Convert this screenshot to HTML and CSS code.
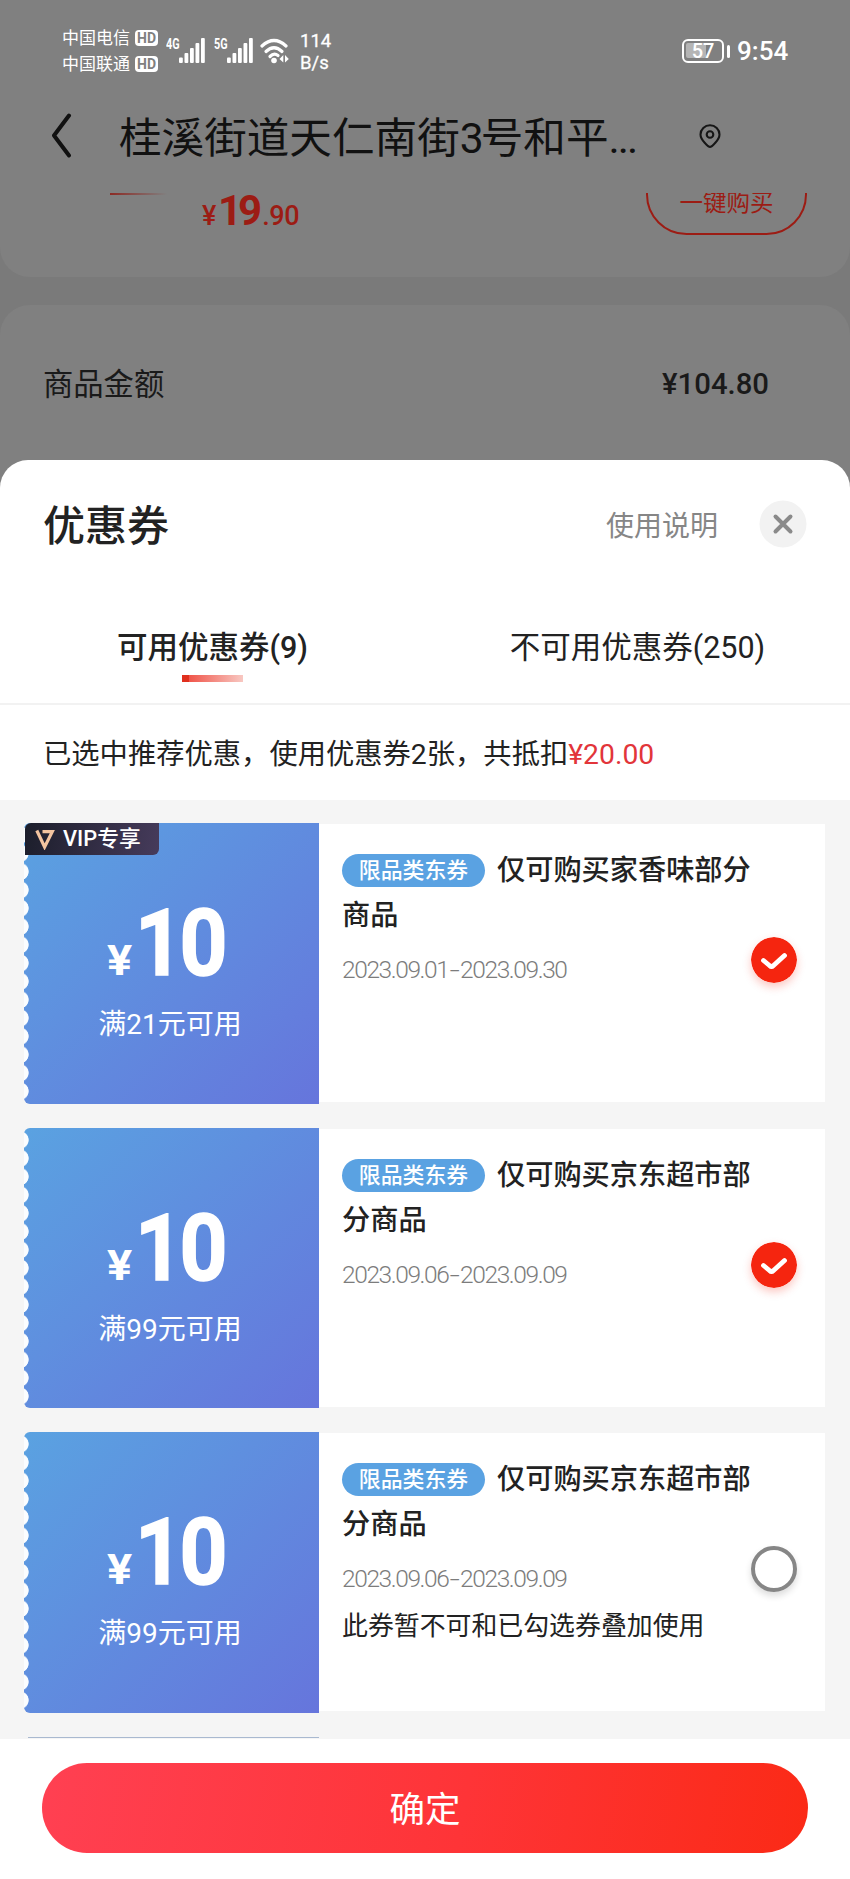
FILE: index.html
```html
<!DOCTYPE html>
<html lang="zh-CN">
<head>
<meta charset="utf-8">
<title>优惠券</title>
<link rel="stylesheet" href="styles.css">
</head>
<body>
<svg width="0" height="0" class="defs">
  <symbol id="bars" viewBox="0 0 26 25">
    <g fill="#fff"><rect x="0" y="19.5" width="3.8" height="5.5" rx="1"/><rect x="5.5" y="15" width="3.8" height="10" rx="1"/><rect x="11" y="10" width="3.8" height="15" rx="1"/><rect x="16.500" y="5" width="3.800" height="20" rx="1"/><rect x="22" y="0" width="3.800" height="25" rx="1"/></g>
  </symbol>
  <symbol id="tick" viewBox="0 0 46 46">
    <circle cx="23" cy="23" r="23" fill="#f5250f"/>
    <path d="M12.500 23.500 Q15.500 26 18.500 28.500 Q20.500 30.500 22.500 28.500 L33.500 18.500" fill="none" stroke="#fff" stroke-width="4.800" stroke-linecap="round" stroke-linejoin="round"/>
  </symbol>
</svg>

<div class="status">
  <div class="carriers">
    <div class="carrier">中国电信<span class="hd">HD</span></div>
    <div class="carrier">中国联通<span class="hd">HD</span></div>
  </div>
  <span class="gen">4G</span><svg class="bars"><use href="#bars"/></svg>
  <span class="gen gen2">5G</span><svg class="bars"><use href="#bars"/></svg>
  <svg class="wifi" viewBox="0 0 30 26">
    <g fill="none" stroke="#fff" stroke-width="3.200" stroke-linecap="round"><path d="M2 8 Q14 -3 26 8"/><path d="M6 13.500 Q14 6 22 13.500"/><path d="M10 18.500 Q14 14.500 18 17.500"/></g>
    <circle cx="14" cy="22.500" r="2.800" fill="#fff"/>
    <path d="M23.300 17 v7.500 L19.500 21 Z M25 17 v7.500 L28.800 21 Z" fill="#fff"/>
  </svg>
  <div class="speed"><div>114</div><div>B/s</div></div>
  <div class="battery"><div class="level"></div><span class="pct">57</span></div>
  <div class="nub"></div>
  <span class="clock">9:54</span>
</div>

<div class="header">
  <svg class="back" viewBox="0 0 22 46"><path d="M18 2.500 L3 22.500 L18 42.500" fill="none" stroke="#111" stroke-width="4" stroke-linecap="round" stroke-linejoin="round"/></svg>
  <div class="address">桂溪街道天仁南街<span class="num">3</span>号和平<span class="dots">...</span></div>
  <svg class="pin" viewBox="0 0 22 25"><path d="M11 23 C9.500 23 1.500 16 1.500 10.500 A9.500 9.200 0 0 1 20.500 10.500 C20.500 16 12.500 23 11 23 Z" fill="none" stroke="#161616" stroke-width="2.100"/><circle cx="11" cy="10.500" r="3.300" fill="none" stroke="#161616" stroke-width="2.100"/></svg>
</div>

<div class="goods">
  <div class="thumb"></div>
  <div class="price"><small class="yen">¥</small><b>19</b><small>.90</small></div>
  <div class="buy">一键购买</div>
</div>
<div class="total">
  <span class="label">商品金额</span><span class="sum">¥104.80</span>
</div>

<div class="sheet">
  <div class="sheet-head">
    <h1>优惠券</h1>
    <span class="help">使用说明</span>
    <svg class="close" viewBox="0 0 48 48"><circle cx="24" cy="24" r="23.500" fill="#f2f2f2"/><path d="M16.500 16.500 L31.500 31.500 M31.500 16.500 L16.500 31.500" stroke="#8a8a8a" stroke-width="4" stroke-linecap="round"/></svg>
  </div>
  <div class="tabs">
    <div class="tab active">可用优惠券(9)</div>
    <div class="tab">不可用优惠券(250)</div>
  </div>
  <div class="summary">已选中推荐优惠，使用优惠券2张，共抵扣<span class="red">¥20.00</span></div>

  <div class="list">
    <div class="coupon">
      <div class="face">
        <div class="vip"><svg class="vip-icon" viewBox="0 0 20 21"><path d="M1.800 1.500 L9.600 18 L17.300 2.600 H7.500" fill="none" stroke="#f3c4a0" stroke-width="3.200"/></svg>VIP专享</div>
        <div class="amount"><span class="cur">¥</span><span class="ten">10</span></div>
        <div class="cond">满21元可用</div>
      </div>
      <div class="info">
        <div class="name"><span class="tag">限品类东券</span>仅可购买家香味部分商品</div>
        <div class="date">2023.09.01<i>-</i>2023.09.30</div>
        <svg class="pick on"><use href="#tick"/></svg>
      </div>
    </div>
    <div class="coupon">
      <div class="face">
        <div class="amount"><span class="cur">¥</span><span class="ten">10</span></div>
        <div class="cond">满99元可用</div>
      </div>
      <div class="info">
        <div class="name"><span class="tag">限品类东券</span>仅可购买京东超市部分商品</div>
        <div class="date">2023.09.06<i>-</i>2023.09.09</div>
        <svg class="pick on"><use href="#tick"/></svg>
      </div>
    </div>
    <div class="coupon">
      <div class="face">
        <div class="amount"><span class="cur">¥</span><span class="ten">10</span></div>
        <div class="cond">满99元可用</div>
      </div>
      <div class="info">
        <div class="name"><span class="tag">限品类东券</span>仅可购买京东超市部分商品</div>
        <div class="date">2023.09.06<i>-</i>2023.09.09</div>
        <div class="note">此券暂不可和已勾选券叠加使用</div>
        <div class="pick off"></div>
      </div>
    </div>
    <div class="peek"></div>
  </div>
  <div class="footer"><div class="ok">确定</div></div>
</div>
</body>
</html>
```
FILE: styles.css
```css
* { box-sizing: border-box; }
body {
  margin: 0;
  width: 850px;
  height: 1879px;
  overflow: hidden;
  background: #7a7a7a;
  color: #222;
  font-family: Roboto, "Noto Sans CJK SC", sans-serif;
}
.defs { position: absolute; }
svg { display: block; flex: none; }

/* status bar */
.status { height: 100px; padding-left: 62px; display: flex; align-items: flex-start; background: #808080; color: #fff; }
.carriers { width: 104px; padding-top: 25px; }
.carrier { height: 26px; display: flex; align-items: center; font-size: 17px; line-height: 26px; white-space: nowrap; }
.hd { margin-left: 5px; width: 23px; height: 16px; border-radius: 4px; background: #fff; color: #808080; font-size: 14px; line-height: 16px; font-weight: 700; text-align: center; }
.gen { width: 13px; margin-top: 35px; font-size: 15px; line-height: 18px; font-weight: 700; transform: scaleX(.72); transform-origin: left; }
.gen2 { margin-left: 9px; }
.bars { width: 26px; height: 25px; margin-top: 38px; }
.wifi { width: 30px; height: 26px; margin: 38px 0 0 7px; }
.speed { margin: 31px 0 0 10px; width: 39px; font-size: 18.500px; line-height: 21.500px; font-weight: 400; -webkit-text-stroke: .300px #fff; }
.battery { margin: 39px 0 0 343px; width: 42px; height: 24px; border: 2.500px solid #fff; border-radius: 6px; display: flex; align-items: center; justify-content: center; position: relative; }
.level { position: absolute; left: 2px; top: 2px; width: 20px; height: 15px; background: #b5b5b5; border-radius: 2px; }
.pct { position: relative; font-size: 20px; line-height: 20px; font-weight: 500; }
.nub { margin: 45px 0 0 3px; width: 3px; height: 13px; border-radius: 2px; background: #fff; }
.clock { margin: 36px 0 0 7px; font-size: 26px; line-height: 31px; font-weight: 500; }

/* page behind the sheet */
.header { height: 93px; padding: 0 0 19px 51px; display: flex; align-items: center; background: #808080; }
.back { width: 22px; height: 46px; margin-top: -3px; }
.address { width: 580px; margin: 2px 0 0 46px; font-size: 42.600px; line-height: 60px; color: #111; white-space: nowrap; }
.num { letter-spacing: -3px; }
.dots { letter-spacing: -2px; }
.pin { width: 22px; height: 25px; margin-top: -1px; }
.goods { height: 84px; overflow: hidden; display: flex; align-items: flex-start; background: #808080; color: #9c1c14; border-radius: 0 0 30px 30px; }
.thumb { width: 57px; height: 2px; margin-left: 110px; background: linear-gradient(90deg, #8c2b25, #808080); }
.price { margin: -4px 0 0 35px; width: 444px; line-height: 44px; white-space: nowrap; }
.price b { font-size: 42px; font-weight: 700; letter-spacing: -4px; margin: 0 4px 0 0; }
.price small { font-size: 27px; font-weight: 500; letter-spacing: -.400px; }
.price .yen { margin-right: 2px; }
.buy { margin-top: -39px; width: 161px; height: 81px; border: 2px solid #9c1c14; border-radius: 41px; text-align: center; font-size: 23.500px; line-height: 95px; }
.total { height: 183px; margin-top: 28px; padding: 0 81px 23px 43px; display: flex; align-items: center; justify-content: space-between; border-radius: 30px 30px 0 0; background: #808080; color: #1a1a1a; font-size: 30.300px; }
.label { margin-top: -6px; }
.sum { margin-top: -2px; font-size: 29.300px; font-weight: 500; }

/* coupon sheet */
.sheet { position: relative; margin-top: -28px; height: 1419px; border-radius: 28px 28px 0 0; background: #fff; }
.sheet-head { height: 144px; padding: 0 43px 16px 43px; display: flex; align-items: center; }
h1 { margin: 5px 0 0; flex: 1; font-size: 42px; line-height: 60px; font-weight: 500; }
.help { font-size: 28px; color: #868686; margin-right: 41px; }
.close { width: 48px; height: 48px; }
.tabs { height: 101px; display: flex; border-bottom: 2px solid #f2f2f2; }
.tab { flex: 1; display: flex; justify-content: center; position: relative; font-size: 30.500px; line-height: 88px; }
.active { font-weight: 500; }
.active::after { content: ""; position: absolute; left: 182px; top: 71px; width: 61px; height: 7px; background: linear-gradient(90deg, #e0301e 0 7px, #f0554a 7px, #f8c8c2); }
.summary { height: 95px; padding-left: 43px; font-size: 28.300px; line-height: 99px; white-space: nowrap; }
.red { color: #e2353a; }
.list { height: 939px; padding: 23px 25px 0 24px; overflow: hidden; background: #f5f5f5; display: flex; flex-direction: column; gap: 24px; }
.coupon { flex: none; height: 280.500px; display: flex; align-items: center; }
.face { position: relative; width: 295px; height: 100%; padding-top: 79px; border-radius: 6px 0 0 6px; color: #fff; text-align: center; background: radial-gradient(ellipse 9px 9px at -4px 9px, #fbfdff 0 8.300px, transparent 9px) 0 3px / 100% 18.300px, linear-gradient(135deg, #5aa2e1, #6675dc); }
.vip { position: absolute; left: 1px; top: 0; width: 134px; height: 32px; padding-left: 10px; display: flex; align-items: center; border-radius: 6px 0 6px 0; background: linear-gradient(100deg, #1c1e2b, #463b5b); font-size: 21.800px; line-height: 30px; font-weight: 500; white-space: nowrap; }
.vip-icon { width: 20px; height: 21px; margin-right: 8px; }
.amount { height: 84px; padding-left: 83px; display: flex; align-items: baseline; font-size: 93px; line-height: 84px; font-weight: 700; }
.cur { width: 28px; font-size: 42px; text-align: left; transform: scaleX(1.120); transform-origin: left; }
.ten { letter-spacing: -4px; transform: scaleX(.900); transform-origin: left; -webkit-text-stroke: 1.500px #fff; }
.cond { margin-top: 18px; padding-right: 3px; font-size: 28px; line-height: 42px; }
.info { position: relative; width: 506px; height: 278px; padding: 24px 60px 0 23px; background: #fff; }
.name { width: 415px; font-size: 28.200px; line-height: 45px; font-weight: 500; word-break: break-all; }
.tag { display: inline-block; width: 143px; height: 33px; margin-right: 12px; border-radius: 17px; background: #5aa2e2; color: #fff; font-size: 21.900px; line-height: 33px; text-align: center; vertical-align: middle; position: relative; top: -2px; }
.date { margin-top: 14px; height: 36px; font-size: 24.500px; line-height: 36px; font-weight: 300; letter-spacing: -1.400px; color: #7c7c7c; white-space: nowrap; }
.date i { display: inline-block; font-style: normal; transform: scaleX(1.500); margin: 0 3px; }
.note { margin-top: 9px; font-size: 25.900px; line-height: 40px; white-space: nowrap; }
.pick { position: absolute; left: 431.500px; top: 113px; width: 46px; height: 46px; border-radius: 50%; }
.on { box-shadow: 0 4px 8px rgba(245, 37, 15, .25); }
.off { border: 4px solid #868686; box-shadow: 0 4px 7px rgba(0, 0, 0, .14); }
.peek { flex: none; width: 291px; margin-left: 4px; height: 1.500px; background: #a9b9d0; }
.footer { height: 140px; padding: 24px 42px 0; }
.ok { height: 90px; border-radius: 45px; background: linear-gradient(100deg, #ff4052, #fe3437 55%, #fb2a16); color: #fff; text-align: center; font-size: 35.500px; line-height: 94px; }
```
